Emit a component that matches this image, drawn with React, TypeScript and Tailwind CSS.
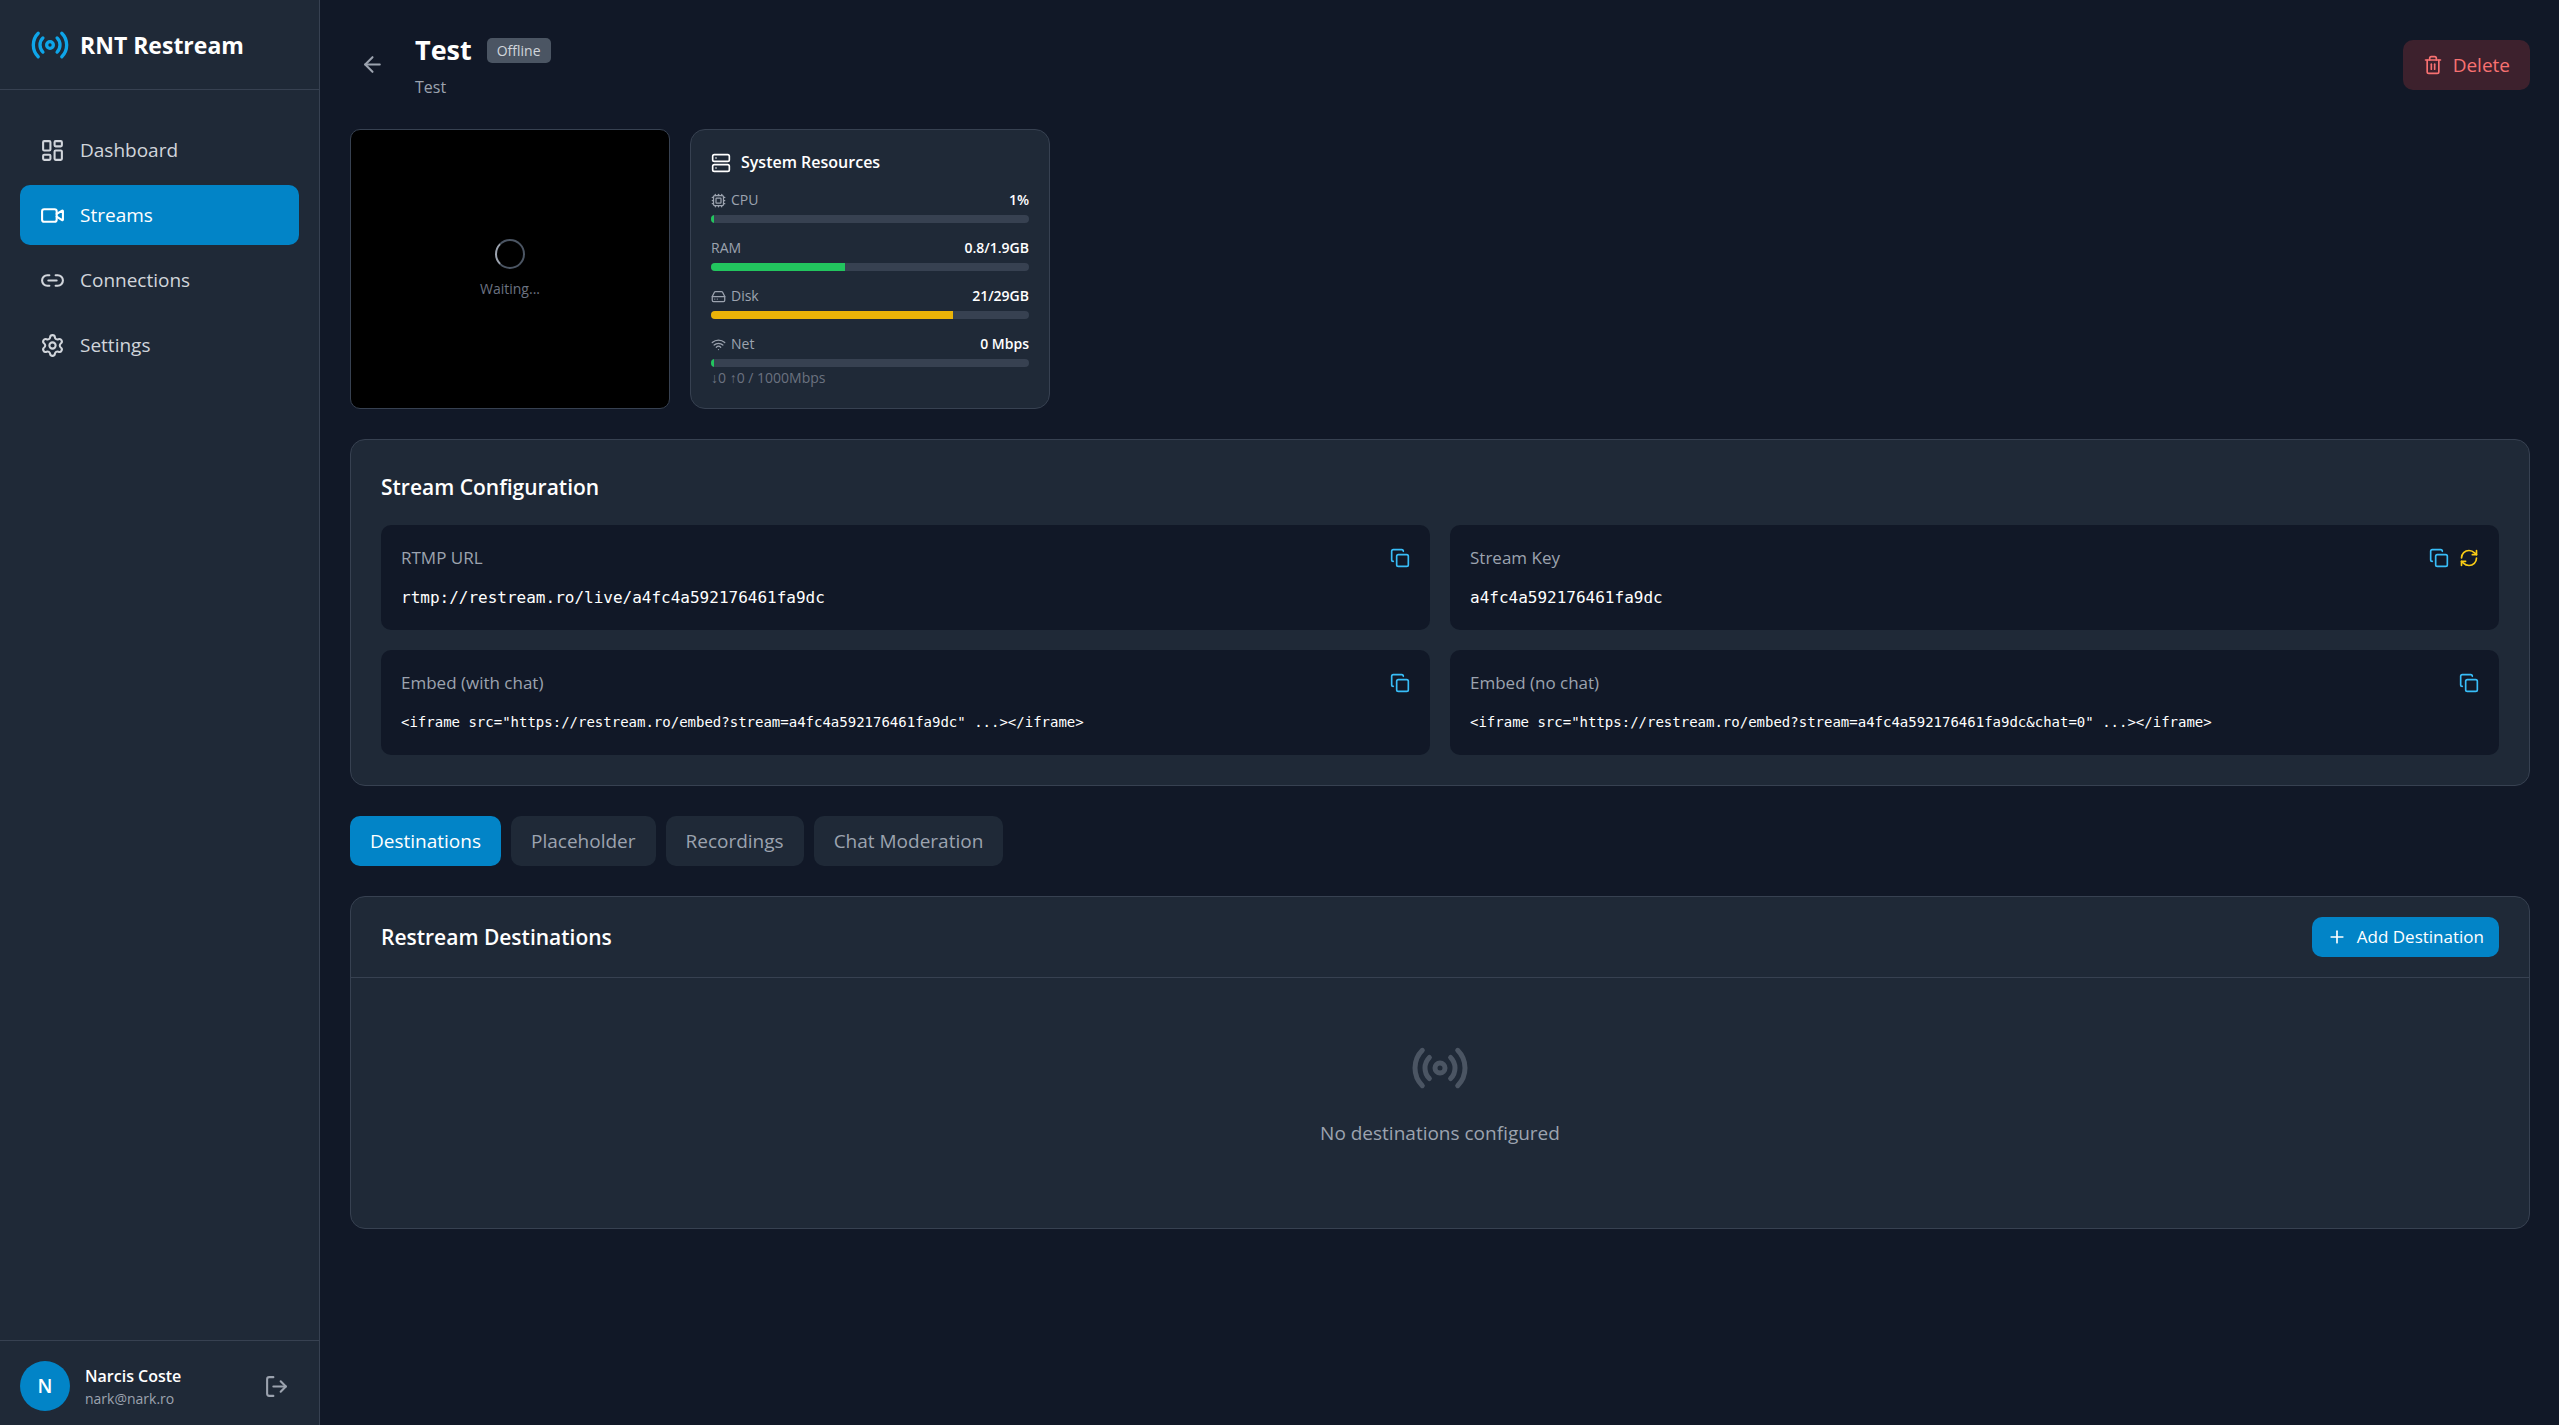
import React, { useState } from 'react';
import {
  ArrowLeft,
  Copy,
  Cpu,
  HardDrive,
  LayoutDashboard,
  Link2,
  LogOut,
  Plus,
  Radio,
  RefreshCw,
  Server,
  Settings,
  Trash2,
  Video,
  Wifi,
} from 'lucide-react';

const STREAM_KEY = 'a4fc4a592176461fa9dc';

const navItems = [
  { label: 'Dashboard', icon: LayoutDashboard, active: false },
  { label: 'Streams', icon: Video, active: true },
  { label: 'Connections', icon: Link2, active: false },
  { label: 'Settings', icon: Settings, active: false },
];

const resources = [
  { label: 'CPU', icon: Cpu, value: '1%', percent: 1, color: 'bg-[#22c55e]' },
  { label: 'RAM', icon: null, value: '0.8/1.9GB', percent: 42, color: 'bg-[#22c55e]' },
  { label: 'Disk', icon: HardDrive, value: '21/29GB', percent: 76, color: 'bg-[#eab308]' },
  { label: 'Net', icon: Wifi, value: '0 Mbps', percent: 1, color: 'bg-[#22c55e]' },
];

const tabs = ['Destinations', 'Placeholder', 'Recordings', 'Chat Moderation'];

const Sidebar: React.FC = () => (
  <aside className="flex w-80 shrink-0 flex-col border-r border-[#374151] bg-[#1f2937]">
    <div className="flex h-[90px] items-center gap-2.5 border-b border-[#374151] px-[30px]">
      <Radio size={40} className="text-[#0ea5e9]" />
      <span className="text-[23px] leading-8 font-bold text-white">RNT Restream</span>
    </div>

    <nav className="mt-[30px] flex flex-1 flex-col gap-[5px] px-5">
      {navItems.map(({ label, icon: Icon, active }) => (
        <a
          key={label}
          href="#"
          className={`flex h-[60px] items-center gap-[15px] rounded-[10px] px-5 text-[19px] ${
            active ? 'bg-[#0284c7] text-white' : 'text-[#d1d5db] hover:bg-[#374151]'
          }`}
        >
          <Icon size={25} />
          {label}
        </a>
      ))}
    </nav>

    <div className="flex items-center gap-[15px] border-t border-[#374151] px-5 pt-5 pb-[14px]">
      <div className="flex size-[50px] items-center justify-center rounded-full bg-[#0284c7] text-[19px] font-semibold text-white">
        N
      </div>
      <div className="min-w-0 flex-1">
        <p className="text-[16px] leading-[25px] font-semibold text-white">Narcis Coste</p>
        <p className="text-[14px] leading-5 text-[#9ca3af]">nark@nark.ro</p>
      </div>
      <button aria-label="Log out" className="p-2.5 text-[#9ca3af] hover:text-white">
        <LogOut size={25} />
      </button>
    </div>
  </aside>
);

const SystemResources: React.FC = () => (
  <section className="w-[360px] rounded-[15px] border border-[#374151] bg-[#1f2937] p-5">
    <h2 className="mb-[15px] flex items-center gap-2.5 text-[16px] leading-[25px] font-semibold text-white">
      <Server size={20} />
      System Resources
    </h2>
    <div className="flex flex-col gap-[15px]">
      {resources.map(({ label, icon: Icon, value, percent, color }) => (
        <div key={label}>
          <div className="mb-[5px] flex items-center justify-between text-[14px] leading-5">
            <span className="flex items-center gap-[5px] text-[#9ca3af]">
              {Icon && <Icon size={15} />}
              {label}
            </span>
            <span className="font-semibold text-white">{value}</span>
          </div>
          <div className="h-2 overflow-hidden rounded-full bg-[#374151]">
            <div className={`h-full ${color}`} style={{ width: `${percent}%` }} />
          </div>
        </div>
      ))}
    </div>
    <p className="mt-px text-[14px] leading-5 text-[#6b7280]">↓0 ↑0 / 1000Mbps</p>
  </section>
);

interface ConfigFieldProps {
  label: string;
  value: string;
  small?: boolean;
  onRegenerate?: () => void;
}

const ConfigField: React.FC<ConfigFieldProps> = ({ label, value, small, onRegenerate }) => (
  <div className="min-w-0 rounded-[10px] bg-[#111827] p-5">
    <div className="mb-[15px] flex h-[25px] items-center justify-between">
      <span className="text-[17px] text-[#9ca3af]">{label}</span>
      <div className="flex gap-2.5">
        <button
          aria-label={`Copy ${label}`}
          onClick={() => navigator.clipboard?.writeText(value)}
          className="text-[#38bdf8] hover:text-[#7dd3fc]"
        >
          <Copy size={20} />
        </button>
        {onRegenerate && (
          <button aria-label="Regenerate key" onClick={onRegenerate} className="text-[#facc15] hover:text-[#fde047]">
            <RefreshCw size={20} />
          </button>
        )}
      </div>
    </div>
    <code
      className={`block truncate font-['DejaVu_Sans_Mono',monospace] leading-[25px] text-white ${
        small ? 'text-[14px]' : 'text-[16px]'
      }`}
    >
      {value}
    </code>
  </div>
);

const App: React.FC = () => {
  const [activeTab, setActiveTab] = useState('Destinations');

  return (
    <div className="flex min-h-screen bg-[#111827] font-['Open_Sans','Noto_Sans',sans-serif] text-[19px] leading-[30px]">
      <Sidebar />

      <main className="min-w-0 flex-1 py-[30px] pr-[29px] pl-[30px]">
        <header className="mb-[30px] flex items-center gap-5">
          <button aria-label="Back" className="p-2.5 text-[#9ca3af] hover:text-white">
            <ArrowLeft size={25} />
          </button>
          <div className="flex-1">
            <div className="flex items-center gap-[15px]">
              <h1 className="text-[27px] leading-10 font-bold text-white">Test</h1>
              <span className="rounded-[5px] bg-[#4b5563] px-2.5 text-[14px] leading-[25px] font-medium text-[#d1d5db]">
                Offline
              </span>
            </div>
            <p className="mt-[5px] text-[16px] leading-6 text-[#9ca3af]">Test</p>
          </div>
          <button className="flex h-[50px] items-center gap-2.5 rounded-[10px] bg-[#ef4444]/20 px-5 text-[#f87171] hover:bg-[#ef4444]/30">
            <Trash2 size={20} />
            Delete
          </button>
        </header>

        <div className="mb-[30px] flex gap-5">
          <div className="flex w-80 flex-col items-center justify-center gap-2.5 rounded-[10px] border border-[#374151] bg-black">
            <div className="size-[30px] rounded-full border-2 border-[#4b5563] border-l-[#9ca3af]" />
            <p className="text-[14px] leading-5 text-[#6b7280]">Waiting...</p>
          </div>
          <SystemResources />
        </div>

        <section className="mb-[30px] rounded-[15px] border border-[#374151] bg-[#1f2937] p-[30px]">
          <h2 className="mb-5 text-[21px] leading-[35px] font-semibold text-white">Stream Configuration</h2>
          <div className="grid grid-cols-2 gap-5">
            <ConfigField label="RTMP URL" value={`rtmp://restream.ro/live/${STREAM_KEY}`} />
            <ConfigField label="Stream Key" value={STREAM_KEY} onRegenerate={() => {}} />
            <ConfigField
              small
              label="Embed (with chat)"
              value={`<iframe src="https://restream.ro/embed?stream=${STREAM_KEY}" ...></iframe>`}
            />
            <ConfigField
              small
              label="Embed (no chat)"
              value={`<iframe src="https://restream.ro/embed?stream=${STREAM_KEY}&chat=0" ...></iframe>`}
            />
          </div>
        </section>

        <div role="tablist" className="mb-[30px] flex gap-2.5">
          {tabs.map((tab) => (
            <button
              key={tab}
              role="tab"
              aria-selected={activeTab === tab}
              onClick={() => setActiveTab(tab)}
              className={`h-[50px] rounded-[10px] px-5 ${
                activeTab === tab ? 'bg-[#0284c7] text-white' : 'bg-[#1f2937] text-[#9ca3af] hover:bg-[#374151]'
              }`}
            >
              {tab}
            </button>
          ))}
        </div>

        <section className="rounded-[15px] border border-[#374151] bg-[#1f2937]">
          <div className="flex items-center justify-between border-b border-[#374151] px-[30px] py-5">
            <h2 className="text-[21px] font-semibold text-white">Restream Destinations</h2>
            <button className="flex h-10 items-center gap-2.5 rounded-[10px] bg-[#0284c7] px-[15px] text-[17px] text-white hover:bg-[#0369a1]">
              <Plus size={20} />
              Add Destination
            </button>
          </div>
          <div className="flex flex-col items-center gap-5 pt-[60px] pb-20">
            <Radio size={60} className="text-[#4b5563]" />
            <p className="text-[#9ca3af]">No destinations configured</p>
          </div>
        </section>
      </main>
    </div>
  );
};

export default App;
